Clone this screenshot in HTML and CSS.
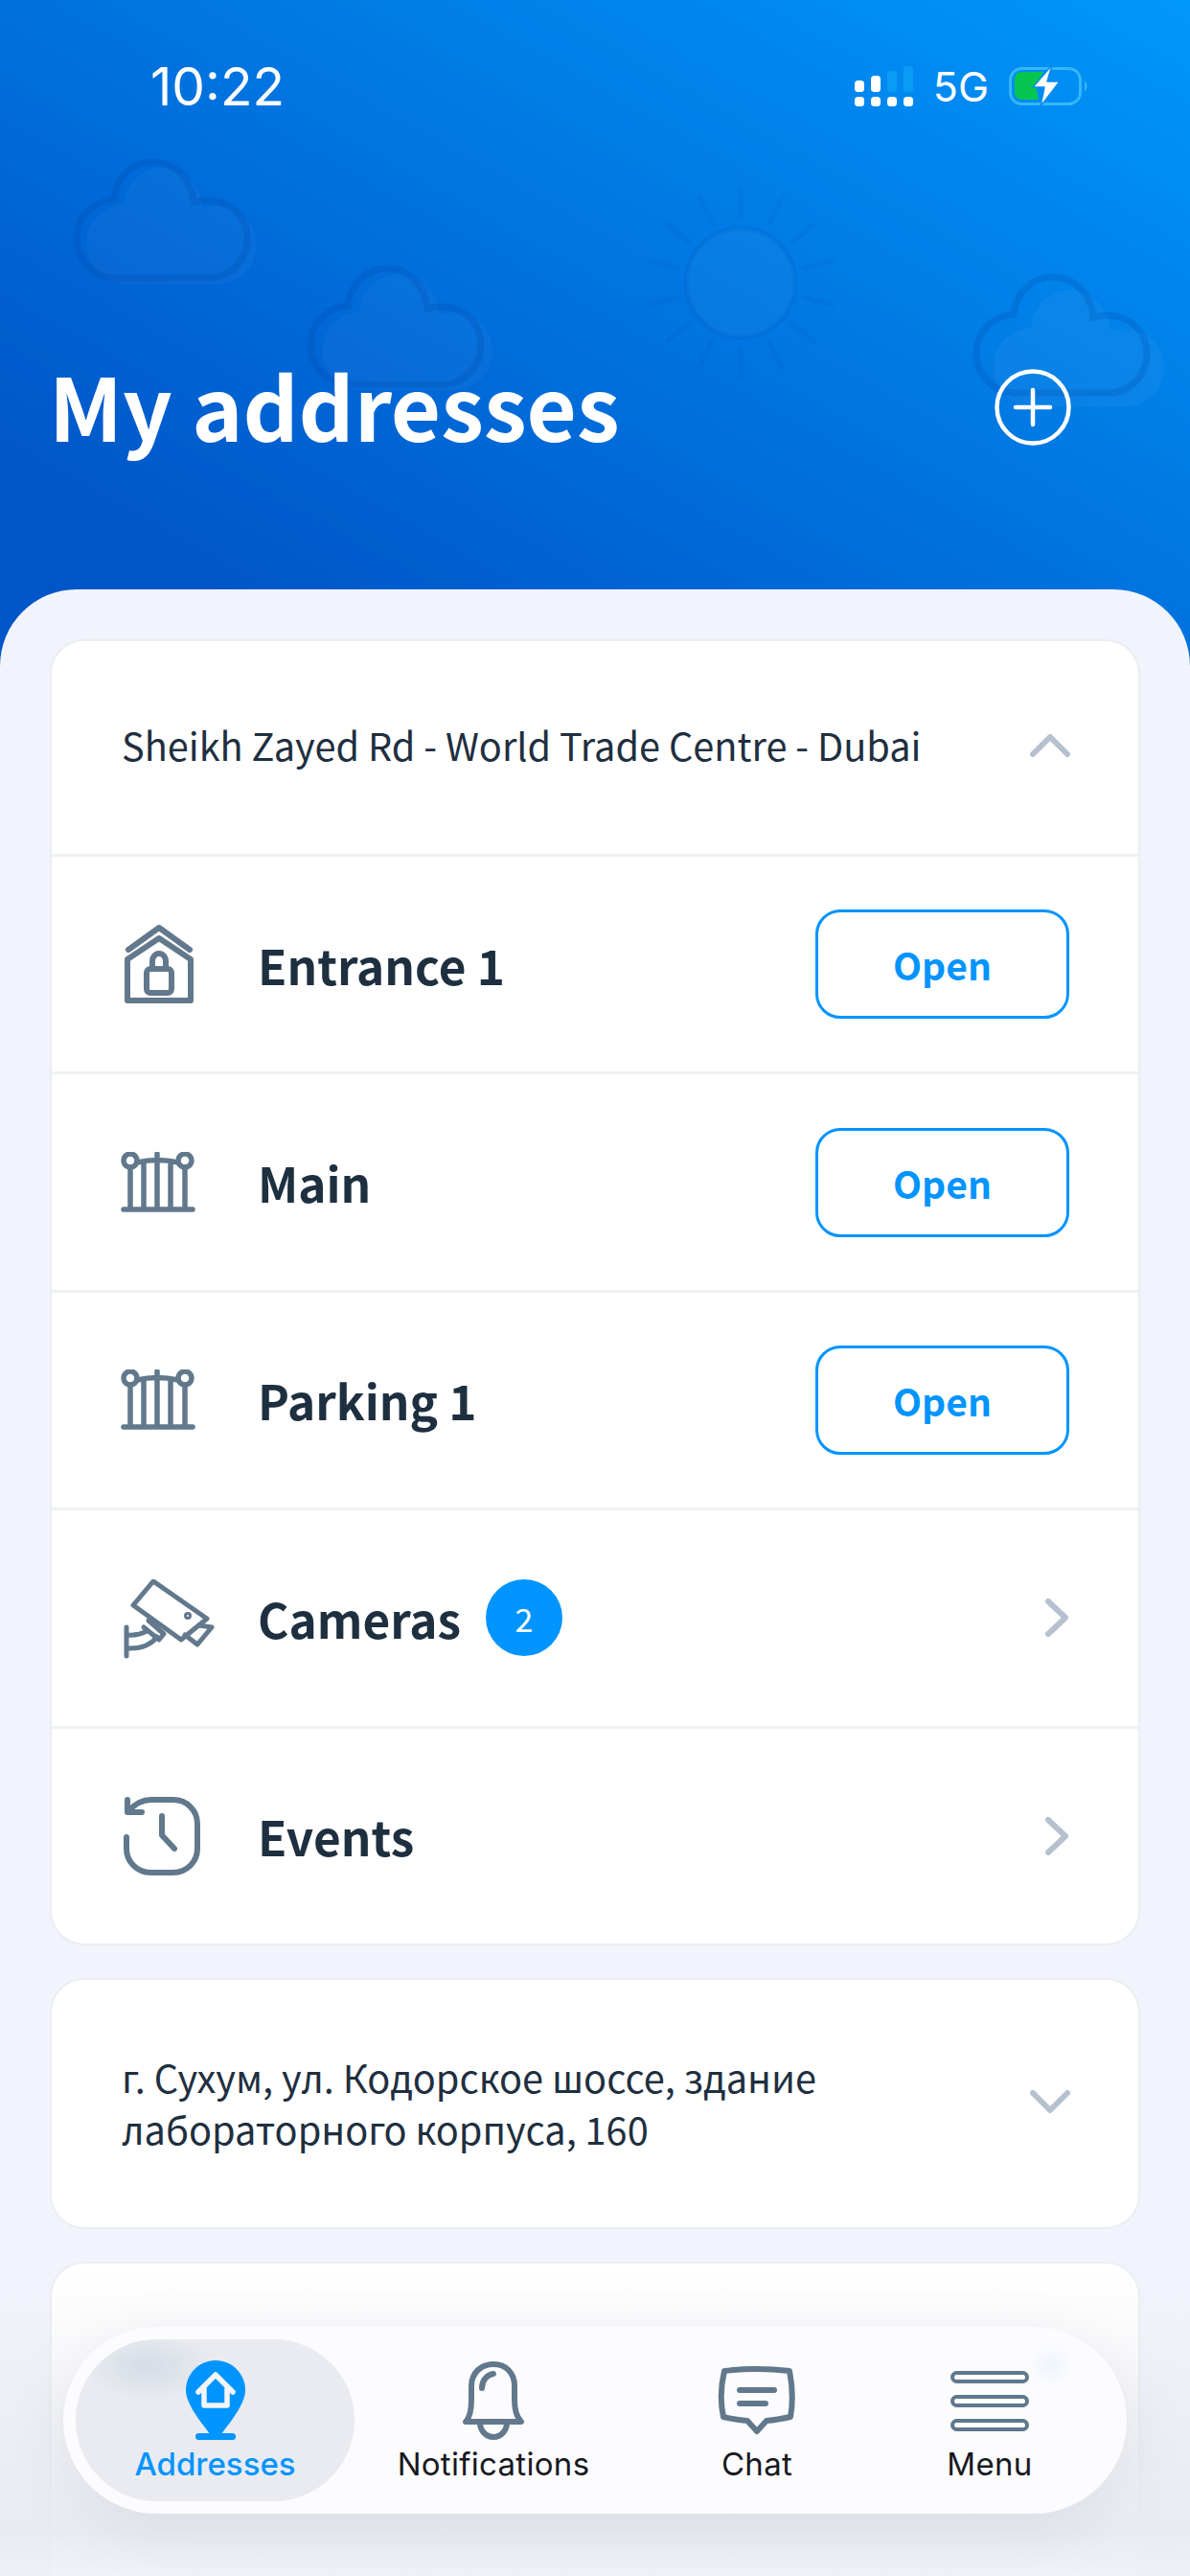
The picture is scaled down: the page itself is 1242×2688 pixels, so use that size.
FILE: index.html
```html
<!DOCTYPE html>
<html lang="en">
  <head>
    <meta charset="UTF-8" />
    <meta name="viewport" content="width=device-width, initial-scale=1.0" />
    <title>My addresses</title>
    <link rel="stylesheet" href="styles.css">
  </head>
  <body>
    <div class="screen">
      <header class="top">
        <!-- faint weather drawing behind the title -->
        <svg class="weather" width="1242" height="480" viewBox="0 0 1242 480">
          <defs>
            <path id="cloud" d="M45 125H142C165 125 182 106 182 84C182 62 165 44 140 44C136 44 130 45 126 46C124 22 106 4 84 4C62 4 45 21 43 43C20 45 4 62 4 84C4 106 22 125 45 125Z" />
          </defs>
          <g transform="translate(76 165)">
            <use href="#cloud" x="10" y="6" fill="#fff" fill-opacity="0.03" />
            <use href="#cloud" fill="none" stroke="#003f9e" stroke-opacity="0.2" stroke-width="7" />
          </g>
          <g transform="translate(320 276)">
            <use href="#cloud" x="12" y="6" fill="#fff" fill-opacity="0.03" />
            <use href="#cloud" fill="none" stroke="#003f9e" stroke-opacity="0.2" stroke-width="7" />
          </g>
          <g transform="translate(1015 285)">
            <use href="#cloud" x="18" y="14" fill="#fff" fill-opacity="0.04" />
            <use href="#cloud" fill="none" stroke="#003f9e" stroke-opacity="0.2" stroke-width="7" />
          </g>
          <g transform="translate(773 295)" fill="none" stroke="#003f9e" stroke-opacity="0.07" stroke-width="5">
            <circle r="57" fill="#fff" fill-opacity="0.03" stroke-opacity="0.11" />
            <path d="M0-66V-100M29-60L44-91M52-41L78-62M64-15L98-23M64 15L98 23M52 41L78 62M29 60L44 91M0 66V100M-29 60L-44 91M-52 41L-78 62M-64 15L-98 23M-64-15L-98-23M-52-41L-78-62M-29-60L-44-91" />
          </g>
        </svg>

        <div class="status">
          <span class="time">10:22</span>
          <div class="status-right">
            <svg width="62" height="44" viewBox="0 0 62 44">
              <g fill="#fff">
                <rect x="1" y="16" width="10" height="12" rx="3.5" />
                <rect x="18" y="11" width="10" height="17" rx="3.5" />
                <rect x="1" y="33" width="10" height="10" rx="3.5" />
                <rect x="18" y="33" width="10" height="10" rx="3.5" />
                <rect x="35" y="33" width="10" height="10" rx="3.5" />
                <rect x="52" y="33" width="10" height="10" rx="3.5" />
              </g>
              <g fill="#0a9cf5">
                <rect x="35" y="6" width="10" height="22" rx="3.5" />
                <rect x="52" y="1" width="10" height="27" rx="3.5" />
              </g>
            </svg>
            <span class="net">5G</span>
            <svg width="86" height="44" viewBox="0 0 86 44">
              <rect x="1.5" y="3.5" width="73" height="37" rx="12" fill="none" stroke="#35b6f7" stroke-width="3" />
              <path d="M14 7H36L28 21L31 36H14Q6 36 6 28V15Q6 7 14 7Z" fill="#05c750" />
              <path d="M79 16Q84 22 79 28Z" fill="#35b6f7" />
              <path d="M45 0L25 23H37L33 43L53 17H40Z" fill="#fff" stroke="#0a8bee" stroke-width="1.5" stroke-linejoin="round" />
            </svg>
          </div>
        </div>

        <div class="title-row">
          <h1>My addresses</h1>
          <svg class="add" width="80" height="80" viewBox="0 0 80 80" fill="none" stroke="#fff" stroke-linecap="round">
            <circle cx="40" cy="40" r="37.5" stroke-width="4.5" />
            <path d="M40 22V58M22 40H58" stroke-width="4.5" />
          </svg>
        </div>
      </header>

      <main class="sheet">
        <section class="card">
          <div class="addr">
            <span>Sheikh Zayed Rd - World Trade Centre - Dubai</span>
            <svg class="chev" width="42" height="26" viewBox="0 0 42 26"><path d="M3 23L21 5L39 23" /></svg>
          </div>
          <div class="row">
            <div class="ico">
              <svg class="row-icon house" width="72" height="82" viewBox="0 0 72 82">
                <path d="M4 26L36 3L68 26" />
                <path d="M3 36L36 14L69 36V79H3Z" />
                <rect x="23" y="46" width="26" height="25" rx="4" />
                <path d="M29 46V38a7 8 0 0 1 14 0V46" />
              </svg>
            </div>
            <span class="label">Entrance 1</span>
            <button class="open">Open</button>
          </div>
          <div class="row">
            <div class="ico">
              <svg class="row-icon gate" width="78" height="64" viewBox="0 0 78 64">
                <circle cx="10" cy="9" r="7" />
                <circle cx="67" cy="9" r="7" />
                <path d="M17 11Q38 6 60 11M38 2V60M10 16V60M24 10V60M52 10V60M67 16V60M3 60H75" />
              </svg>
            </div>
            <span class="label">Main</span>
            <button class="open">Open</button>
          </div>
          <div class="row">
            <div class="ico">
              <svg class="row-icon gate" width="78" height="64" viewBox="0 0 78 64">
                <circle cx="10" cy="9" r="7" />
                <circle cx="67" cy="9" r="7" />
                <path d="M17 11Q38 6 60 11M38 2V60M10 16V60M24 10V60M52 10V60M67 16V60M3 60H75" />
              </svg>
            </div>
            <span class="label">Parking 1</span>
            <button class="open">Open</button>
          </div>
          <div class="row">
            <div class="ico">
              <svg class="row-icon cam" width="96" height="84" viewBox="0 0 96 84">
                <path d="M32 2L88 41L61 63L11 27Z" />
                <path d="M80 48L93 50L78 68L65 58" />
                <path d="M27 43L43 57L38 63L22 50" />
                <path d="M4 50V80M5 58Q16 59 25 54M5 72Q26 73 36 60" />
                <circle cx="68" cy="38" r="1.5" />
              </svg>
            </div>
            <span class="label">Cameras</span>
            <span class="badge">2</span>
            <svg class="chev go" width="26" height="40" viewBox="0 0 26 40"><path d="M4 3L22 20L4 37" /></svg>
          </div>
          <div class="row">
            <div class="ico">
              <svg class="row-icon" width="82" height="82" viewBox="0 0 82 82">
                <path d="M4 42V54a25 25 0 0 0 25 25H53a25 25 0 0 0 25-25V28a25 25 0 0 0-25-25H30C21 3 12 8 6 15" />
                <path d="M5 3V16H20M41 20V40L54 54" />
              </svg>
            </div>
            <span class="label">Events</span>
            <svg class="chev go" width="26" height="40" viewBox="0 0 26 40"><path d="M4 3L22 20L4 37" /></svg>
          </div>
        </section>

        <section class="card">
          <div class="addr addr-two">
            <span>г. Сухум, ул. Кодорское шоссе, здание<br />лабораторного корпуса, 160</span>
            <svg class="chev" width="42" height="26" viewBox="0 0 42 26"><path d="M3 3L21 21L39 3" /></svg>
          </div>
        </section>

        <section class="card card-last"></section>
      </main>

      <div class="fade"></div>

      <nav class="tabbar">
        <a class="tab active">
          <svg width="62" height="83" viewBox="0 0 62 83">
            <path d="M31 0C48 0 62 14 62 31C62 44 50 60 36 78H26C12 60 0 44 0 31C0 14 14 0 31 0Z" fill="#0094ff" />
            <rect x="10" y="76" width="42" height="7" rx="3.5" fill="#0094ff" />
            <path d="M13 33L31 15L49 33M19 29V47H43V29" fill="none" stroke="#f3f5f9" stroke-width="5.5" stroke-linecap="round" stroke-linejoin="round" />
          </svg>
          <span>Addresses</span>
        </a>
        <a class="tab">
          <svg class="outline" width="66" height="82" viewBox="0 0 66 82">
            <path d="M4 63C9 58 10 50 10 40V26C10 12 20 3 33 3C46 3 55 12 55 26V40C55 50 57 58 62 63Z" />
            <path d="M19 64a14 15 0 0 0 28 0" />
            <path d="M21 28C21 20 26 14 33 13" />
          </svg>
          <span>Notifications</span>
        </a>
        <a class="tab">
          <svg class="outline chat" width="82" height="74" viewBox="0 0 82 74">
            <path d="M7 5Q41 1 75 5Q80 30 76 53Q62 56 51 57L41 68L31 57Q18 56 6 53Q1 30 7 5Z" />
            <path d="M23 25H59M23 39H50" />
          </svg>
          <span>Chat</span>
        </a>
        <a class="tab">
          <svg class="bars" width="82" height="64" viewBox="0 0 82 64">
            <rect x="2" y="2" width="78" height="9" rx="4.5" />
            <rect x="2" y="27" width="78" height="9" rx="4.5" />
            <rect x="2" y="52" width="78" height="9" rx="4.5" />
          </svg>
          <span>Menu</span>
        </a>
      </nav>
    </div>
  </body>
</html>
```

FILE: styles.css
```css
* {
  box-sizing: border-box;
}

body {
  margin: 0;
  font-family: "Noto Sans CJK SC", "Noto Sans", sans-serif;
  color: #1f2f3f;
}

.screen {
  position: relative;
  width: 1242px;
  height: 2688px;
  overflow: hidden;
  background-color: #f1f4fc;
}

/* Blue header */
.top {
  position: relative;
  height: 700px;
  padding: 65px 103px 0 51px;
  background: linear-gradient(to bottom left, #0097fb, #0055c8 86%);
  color: #fff;
}

.weather {
  position: absolute;
  left: 0;
  top: 0;
}

.status {
  position: relative;
  display: flex;
  justify-content: space-between;
  align-items: center;
  height: 50px;
  padding-left: 106px;
  font-family: Inter, "Liberation Sans", sans-serif;
}

.time {
  font-size: 55px;
}

.status-right {
  display: flex;
  align-items: center;
  gap: 21px;
}

.net {
  font-size: 43px;
}

.title-row {
  position: relative;
  display: flex;
  justify-content: space-between;
  align-items: center;
  margin-top: 257px;
  height: 100px;
  padding-right: 21px;
}

.title-row h1 {
  margin: 0;
  font-size: 90.2px;
  font-weight: 700;
  line-height: 100px;
}

.add {
  margin-top: 6px;
}

/* Grey sheet with the address cards */
.sheet {
  position: relative;
  margin-top: -85px;
  height: 2073px;
  padding: 52px 52px 0;
  border-radius: 80px 80px 0 0;
  background-color: #f1f4fc;
}

.card {
  margin-bottom: 34px;
  border: 2px solid #ecedf0;
  border-radius: 36px;
  background-color: #fff;
}

.card-last {
  height: 400px;
}

.addr {
  display: flex;
  justify-content: space-between;
  align-items: center;
  height: 222px;
  padding: 0 71px 6px 73px;
  font-size: 39.7px;
  line-height: 54px;
}

.addr-two {
  height: 258px;
  padding-bottom: 2px;
}

.chev {
  flex: none;
  fill: none;
  stroke: #b6c1cf;
  stroke-width: 6;
  stroke-linecap: round;
  stroke-linejoin: round;
}

.row {
  display: flex;
  align-items: center;
  height: 227.4px;
  padding: 0 72px 0 74px;
  border-top: 3px solid #eef1f3;
}

.ico {
  flex: none;
  width: 141px;
  line-height: 0;
}

.row-icon {
  fill: none;
  stroke: #62788c;
  stroke-width: 6;
  stroke-linecap: round;
  stroke-linejoin: round;
}

.row-icon.house {
  margin-left: 2px;
}

.row-icon.gate {
  margin-left: -2px;
  stroke-width: 5.5;
}

.row-icon.cam {
  position: relative;
  top: 2px;
  stroke-width: 5;
}

.label {
  font-size: 49.5px;
  font-weight: 700;
  color: #1e2f40;
}

.open {
  width: 265px;
  height: 114px;
  margin-left: auto;
  border: 3px solid #0094ff;
  border-radius: 26px;
  background-color: #fff;
  color: #0094ff;
  font-family: inherit;
  font-size: 39px;
  font-weight: 700;
}

.badge {
  display: flex;
  justify-content: center;
  align-items: center;
  width: 80px;
  height: 80px;
  margin-left: 26px;
  border-radius: 50%;
  background-color: #0094ff;
  color: #fff;
  font-size: 34px;
}

.chev.go {
  margin-left: auto;
}

/* Bottom of the page goes greyer under the tab bar */
.fade {
  position: absolute;
  left: 0;
  right: 0;
  bottom: 0;
  height: 320px;
  background: linear-gradient(to bottom, rgba(232, 234, 240, 0), rgba(232, 234, 240, 0.9) 85%, rgba(238, 240, 246, 0.85));
}

/* Floating tab bar */
.tabbar {
  position: absolute;
  left: 66px;
  top: 2428px;
  display: grid;
  grid-template-columns: 291px 290px 260px 226px;
  width: 1110px;
  height: 195px;
  padding: 13px;
  border-radius: 98px;
  background:
    radial-gradient(circle at 1031px 39px, rgba(210, 228, 250, 0.3), rgba(210, 228, 250, 0) 26px),
    #fcfcfe;
  box-shadow: 0 16px 60px rgba(120, 130, 150, 0.14);
  font-family: Inter, "Liberation Sans", sans-serif;
}

.tab {
  display: flex;
  flex-direction: column;
  align-items: center;
  justify-content: flex-end;
  height: 169px;
  padding-bottom: 23px;
  font-size: 33px;
  color: #16191f;
  letter-spacing: 0.3px;
}

.tab span {
  margin-top: 9px;
  line-height: 32px;
}

.tab.active {
  border-radius: 85px;
  background:
    radial-gradient(ellipse 70px 36px at 75px 28px, rgba(205, 214, 226, 0.7), rgba(205, 214, 226, 0)),
    #e9ebf0;
  color: #0094ff;
  font-weight: 500;
  letter-spacing: 0;
}

.outline {
  fill: none;
  stroke: #62788c;
  stroke-width: 6;
  stroke-linecap: round;
  stroke-linejoin: round;
}

.outline.chat {
  margin-bottom: 3px;
}

.bars {
  margin-bottom: 8px;
}

.bars rect {
  fill: #fff;
  stroke: #5f788d;
  stroke-width: 4;
}
```
